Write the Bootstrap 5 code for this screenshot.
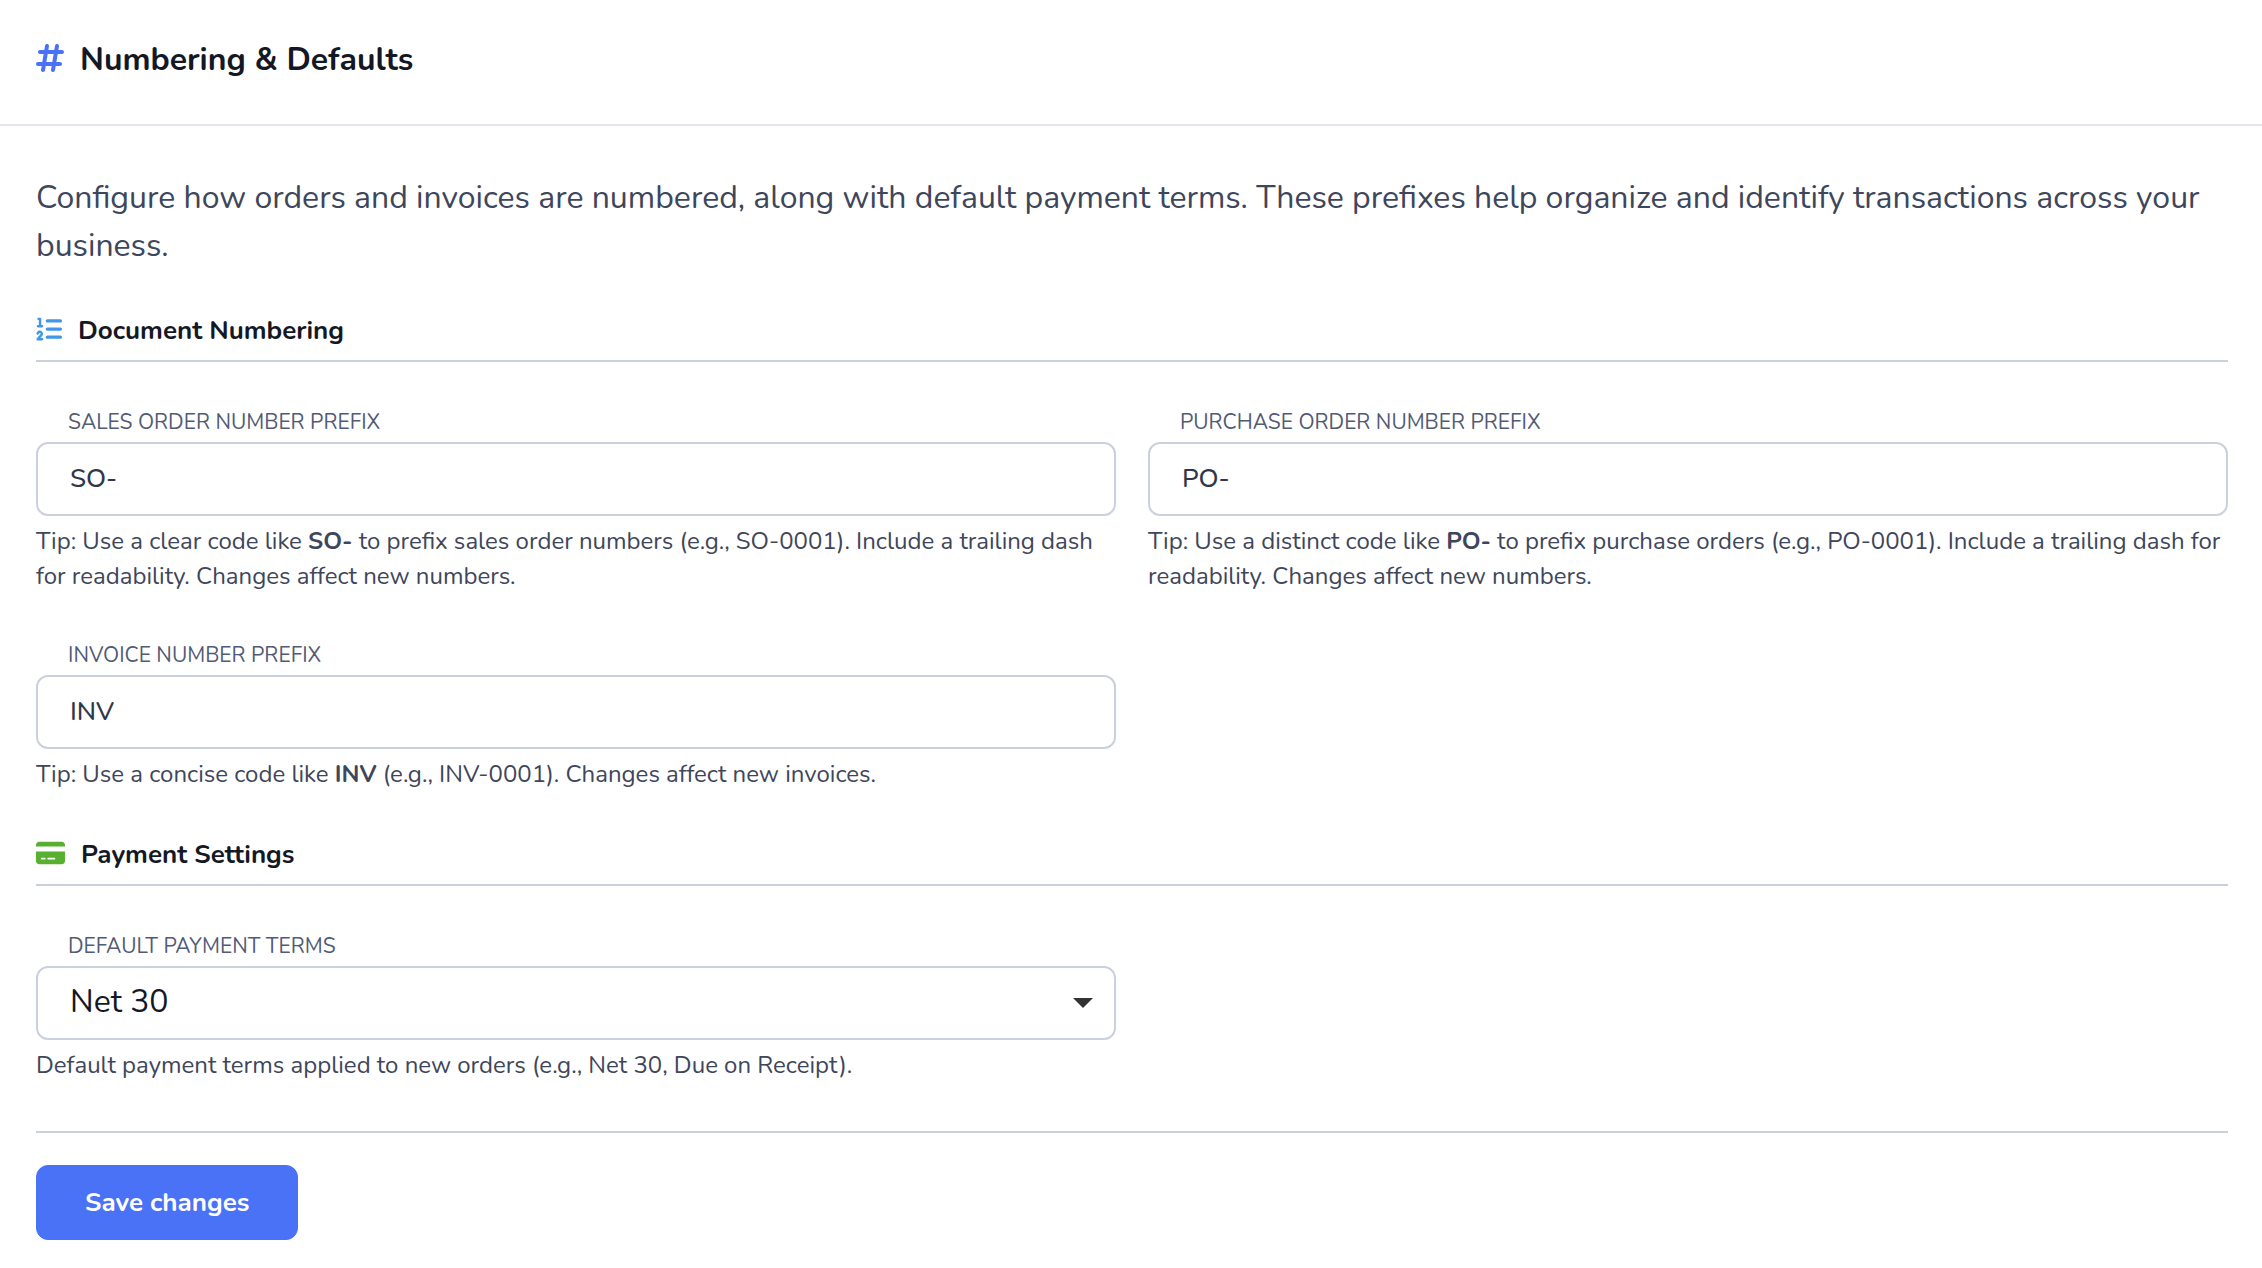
<!DOCTYPE html>
<html lang="en">
<head>
<meta charset="utf-8">
<meta name="viewport" content="width=device-width, initial-scale=1">
<title>Numbering &amp; Defaults</title>
<link href="https://cdn.jsdelivr.net/npm/bootstrap@5.3.0/dist/css/bootstrap.min.css" rel="stylesheet">
<style>
  body { font-family: Nunito, Lato, "Open Sans", sans-serif; color: #141824; background: #fff; }
  .page-head { padding: 36px 36px 40px; border-bottom: 2px solid #e3e6ed; }
  .page-title { font-size: 32px; line-height: 48px; }
  .page-main { padding: 48px 34px 28px 36px; }
  .intro { font-size: 32px; line-height: 48px; color: #3e465b; margin-bottom: 44px; }
  .section-title { font-size: 26px; line-height: 34px; padding-bottom: 12px; margin-bottom: 44px; border-bottom: 2px solid #cbd0dd; }
  .field-grid { --bs-gutter-x: 32px; --bs-gutter-y: 45px; margin-bottom: 46px; }
  .section-title + .field-grid > .col-md-6 { margin-top: 0; }
  .section-title + .field-grid { margin-top: 0; row-gap: 45px; }
  .field-label { display: block; font-size: 21px; line-height: 32px; margin: 0 0 4px; padding-left: 32px; color: #525b75; text-transform: uppercase; }
  .field-box { height: 74px; padding: 0 32px 2px; border: 2px solid #cbd0dd; border-radius: 12px; font-size: 26px; font-weight: 500; color: #31374a; }
  .field-select { font-size: 32px; font-weight: 400; color: #141824; background-size: 20px 10px; background-position: right 21px center;
    background-image: url("data:image/svg+xml,%3csvg xmlns='http://www.w3.org/2000/svg' viewBox='0 0 20 10'%3e%3cpath fill='%23333' d='M0 0h20L10 10z'/%3e%3c/svg%3e"); }
  .field-tip { font-size: 24px; line-height: 35px; margin: 8px 0 0; color: #3e465b; }
  .form-foot { margin-top: 48px; padding-top: 32px; border-top: 2px solid #cbd0dd; }
  .btn-save { --bs-btn-bg: #4a72f7; --bs-btn-border-color: #4a72f7; --bs-btn-hover-bg: #3a62e6; --bs-btn-hover-border-color: #3a62e6;
    height: 75px; padding: 0 48px; border-radius: 12px; font-size: 26px; }
  .ico-hash { color: #4a72f7; }
  .ico-list { color: #4196e9; }
  .ico-card { color: #58b030; }
</style>
<script src="https://cdn.jsdelivr.net/npm/bootstrap@5.3.0/dist/js/bootstrap.bundle.min.js" defer></script>
</head>
<body>
<header class="page-head">
  <h1 class="page-title d-flex align-items-center gap-3 fw-bold mb-0">
    <svg class="ico-hash mb-1" width="28" height="32" viewBox="0 0 448 512" fill="currentColor" aria-hidden="true"><path d="M181.3 32.4c17.4 2.9 29.2 19.4 26.3 36.8L197.8 128l95.1 0 11.5-69.3c2.9-17.4 19.4-29.2 36.8-26.3s29.2 19.4 26.3 36.8L357.8 128l58.2 0c17.7 0 32 14.3 32 32s-14.3 32-32 32l-68.9 0L325.8 320l58.2 0c17.7 0 32 14.3 32 32s-14.3 32-32 32l-68.9 0-11.5 69.3c-2.9 17.4-19.4 29.2-36.8 26.3s-29.2-19.4-26.3-36.8l9.8-58.7-95.1 0-11.5 69.3c-2.9 17.4-19.4 29.2-36.8 26.3s-29.2-19.4-26.3-36.8L90.2 384 32 384c-17.7 0-32-14.3-32-32s14.3-32 32-32l68.9 0 21.3-128L64 192c-17.7 0-32-14.3-32-32s14.3-32 32-32l68.9 0 11.5-69.3c2.9-17.4 19.4-29.2 36.8-26.3zM187.1 192L165.8 320l95.1 0 21.3-128-95.1 0z"/></svg>
    <span>Numbering &amp; Defaults</span>
  </h1>
</header>
<main class="page-main">
  <p class="intro">Configure how orders and invoices are numbered, along with default payment terms. These prefixes help organize and identify transactions across your business.</p>
  <form>
    <h2 class="section-title d-flex align-items-center gap-3 fw-bold">
      <svg class="ico-list mb-1" width="26" height="26" viewBox="0 0 512 512" fill="currentColor" aria-hidden="true"><path d="M24 56c0-13.3 10.7-24 24-24l32 0c13.3 0 24 10.7 24 24l0 120 16 0c13.3 0 24 10.7 24 24s-10.7 24-24 24l-80 0c-13.3 0-24-10.7-24-24s10.7-24 24-24l16 0 0-96-8 0C34.7 80 24 69.3 24 56zM86.7 341.2c-6.5-7.4-18.3-6.9-24 1.2L51.5 357.9c-7.7 10.8-22.7 13.3-33.5 5.6s-13.3-22.7-5.6-33.5l11.1-15.6c23.7-33.2 72.3-35.6 99.2-4.9c21.3 24.4 20.8 60.9-1.1 84.7L86.8 432l33.2 0c13.3 0 24 10.7 24 24s-10.7 24-24 24l-88 0c-9.5 0-18.2-5.6-22-14.4s-2.1-18.9 4.3-25.9l72-78c5.3-5.8 5.4-14.6 .3-20.5zM224 64l256 0c17.7 0 32 14.3 32 32s-14.3 32-32 32l-256 0c-17.7 0-32-14.3-32-32s14.3-32 32-32zm0 160l256 0c17.7 0 32 14.3 32 32s-14.3 32-32 32l-256 0c-17.7 0-32-14.3-32-32s14.3-32 32-32zm0 160l256 0c17.7 0 32 14.3 32 32s-14.3 32-32 32l-256 0c-17.7 0-32-14.3-32-32s14.3-32 32-32z"/></svg>
      <span>Document Numbering</span>
    </h2>
    <div class="row field-grid">
      <div class="col-md-6">
        <label class="field-label" for="so-prefix">Sales Order Number Prefix</label>
        <input class="form-control field-box" id="so-prefix" type="text" value="SO-" aria-describedby="so-tip">
        <p class="field-tip" id="so-tip">Tip: Use a clear code like <strong>SO-</strong> to prefix sales order numbers (e.g., SO-0001). Include a trailing dash for readability. Changes affect new numbers.</p>
      </div>
      <div class="col-md-6">
        <label class="field-label" for="po-prefix">Purchase Order Number Prefix</label>
        <input class="form-control field-box" id="po-prefix" type="text" value="PO-" aria-describedby="po-tip">
        <p class="field-tip" id="po-tip">Tip: Use a distinct code like <strong>PO-</strong> to prefix purchase orders (e.g., PO-0001). Include a trailing dash for readability. Changes affect new numbers.</p>
      </div>
      <div class="col-md-6">
        <label class="field-label" for="inv-prefix">Invoice Number Prefix</label>
        <input class="form-control field-box" id="inv-prefix" type="text" value="INV" aria-describedby="inv-tip">
        <p class="field-tip" id="inv-tip">Tip: Use a concise code like <strong>INV</strong> (e.g., INV-0001). Changes affect new invoices.</p>
      </div>
    </div>
    <h2 class="section-title d-flex align-items-center gap-3 fw-bold">
      <svg class="ico-card mb-1" width="29" height="26" viewBox="0 0 576 512" fill="currentColor" aria-hidden="true"><path d="M64 32C28.7 32 0 60.7 0 96l0 32 576 0 0-32c0-35.3-28.7-64-64-64L64 32zM576 224L0 224 0 416c0 35.3 28.7 64 64 64l448 0c35.3 0 64-28.7 64-64l0-192zM112 352l64 0c8.8 0 16 7.2 16 16s-7.2 16-16 16l-64 0c-8.8 0-16-7.2-16-16s7.2-16 16-16zm112 16c0-8.8 7.2-16 16-16l128 0c8.8 0 16 7.2 16 16s-7.2 16-16 16l-128 0c-8.8 0-16-7.2-16-16z"/></svg>
      <span>Payment Settings</span>
    </h2>
    <div class="row field-grid mb-0">
      <div class="col-md-6">
        <label class="field-label" for="terms">Default Payment Terms</label>
        <select class="form-select field-box field-select" id="terms" aria-describedby="terms-tip">
          <option selected>Net 30</option>
          <option>Due on Receipt</option>
        </select>
        <p class="field-tip" id="terms-tip">Default payment terms applied to new orders (e.g., Net 30, Due on Receipt).</p>
      </div>
    </div>
    <div class="form-foot">
      <button class="btn btn-primary btn-save fw-bold" type="submit">Save changes</button>
    </div>
  </form>
</main>
</body>
</html>
